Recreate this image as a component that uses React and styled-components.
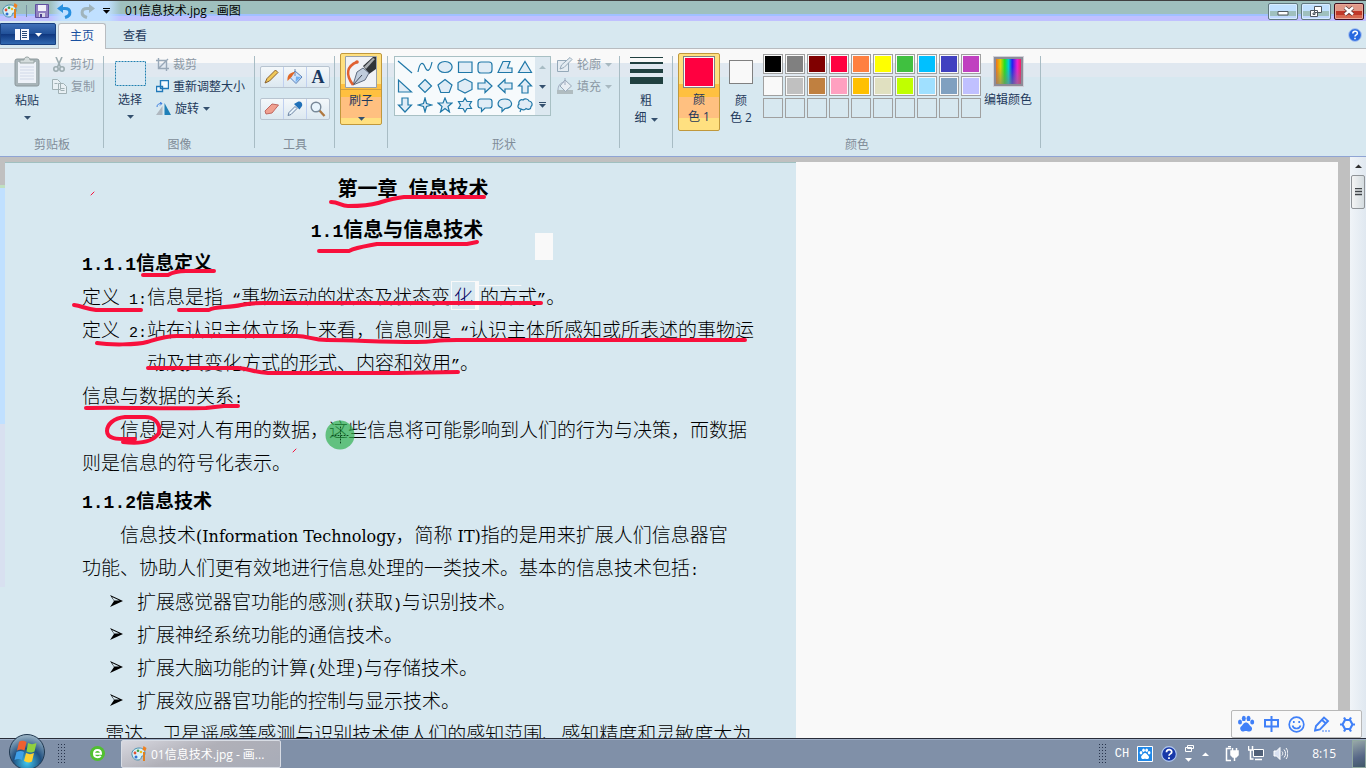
import React from 'react';
import styled, { createGlobalStyle } from 'styled-components';

const GlobalStyle = createGlobalStyle`
  * {
    box-sizing: border-box;
  }
  body {
    margin: 0;
    font-family: 'Open Sans', 'Noto Sans CJK SC', sans-serif;
    font-size: 12px;
    color: #1e395b;
  }
  button {
    font: inherit;
    color: inherit;
    background: none;
    border: 0;
    padding: 0;
  }
  svg {
    display: block;
    flex: none;
  }
`;

const Window = styled.div`
  height: 100vh;
  display: flex;
  flex-direction: column;
  overflow: hidden;
  background: #d7e8f0;
`;

/* title bar */

const TitleBar = styled.header`
  flex: none;
  height: 21px;
  display: flex;
  align-items: center;
  border-top: 1px solid #404040;
  background: linear-gradient(#9fc0be 0 13px, #a0c0ff 13px 15px, #c0c0ff 15px);
`;

const QuickAccess = styled.div`
  display: flex;
  align-items: center;
  height: 20px;
  width: 121px;
  padding-left: 2px;
  gap: 8px;
  background: linear-gradient(90deg, transparent 50px, #c0e0ff 62px 108px, transparent);
`;

const Divider = styled.i`
  width: 1px;
  height: 12px;
  background: #7890a0;
`;

const Title = styled.h1`
  flex: 1;
  margin: 0;
  padding-left: 4px;
  font-size: 12px;
  font-weight: 400;
  line-height: 18px;
  color: #000;
`;

const WindowButtons = styled.div`
  display: flex;
  gap: 3px;
  padding-right: 2px;
`;

const WindowButton = styled.button`
  width: 30px;
  height: 17px;
  display: grid;
  place-items: center;
  border: 1px solid ${p => (p.$close ? '#401020' : '#607880')};
  border-radius: 2px;
  box-shadow: inset 0 0 0 1px ${p => (p.$close ? '#e8a898' : '#d8ecff')};
  background: ${p =>
    p.$close
      ? 'linear-gradient(#e09888 0 7px, #c03828 7px 11px, #d86850 11px)'
      : 'linear-gradient(#c0e0ff 0 7px, #9fc0be 7px 12px, #c0d8ff 12px)'};
`;

/* ribbon */

const Tabs = styled.nav`
  flex: none;
  height: 28px;
  display: flex;
  align-items: flex-end;
  border-bottom: 1px solid #b8bcc0;
`;

const FileButton = styled.button`
  width: 56px;
  height: 22px;
  align-self: flex-start;
  margin: 2px 2px 0 0;
  display: flex;
  align-items: center;
  justify-content: center;
  gap: 6px;
  border: 1px solid #184080;
  border-radius: 0 2px 0 0;
  background: linear-gradient(#4070b8, #205098 50%, #103880 52%, #3068b0);
`;

const Tab = styled.button`
  width: ${p => (p.$active ? '48px' : '58px')};
  height: 26px;
  margin-bottom: -1px;
  padding-bottom: 4px;
  color: ${p => (p.$active ? '#1850a0' : '#1e395b')};
  border: 1px solid ${p => (p.$active ? '#b8bcc0' : 'transparent')};
  border-bottom: 0;
  border-radius: 3px 3px 0 0;
  background: ${p => (p.$active ? '#f9f9f9' : 'transparent')};
`;

const HelpButton = styled.button`
  margin: 0 4px 6px auto;
`;

const Ribbon = styled.section`
  flex: none;
  height: 108px;
  display: flex;
  padding-top: 7px;
  border-bottom: 1px solid #8fa4d4;
  background: linear-gradient(#f9f9f9 0 14px, #e0e8f0 14px 28px, #d7e8f0 28px);
`;

const Group = styled.div`
  width: ${p => p.$width}px;
  height: 100px;
  display: flex;
  flex-direction: column;
  justify-content: space-between;
  background: linear-gradient(#a8bcc4, #a8bcc4) right top / 1px 92px no-repeat;
`;

const GroupBody = styled.div`
  display: flex;
  align-items: flex-start;
  gap: ${p => p.$gap || 0}px;
  padding-left: ${p => p.$pad || 0}px;
  margin-top: ${p => (p.$raised ? '-3px' : '0')};
`;

const GroupLabel = styled.div`
  line-height: 18px;
  padding-bottom: 2px;
  text-align: center;
  color: #808c98;
`;

const Stack = styled.div`
  display: flex;
  flex-direction: column;
  gap: ${p => p.$gap || 0}px;
`;

const BigButton = styled.button`
  width: ${p => p.$width || 42}px;
  display: flex;
  flex-direction: column;
  align-items: center;
  line-height: 17px;
  gap: 5px;
  padding-top: ${p => p.$drop || 0}px;
`;

const SmallButton = styled.button`
  display: flex;
  align-items: center;
  gap: 4px;
  height: 22px;
  padding-bottom: 6px;
  white-space: nowrap;
  color: ${p => (p.$muted ? '#8c98a4' : '#1e395b')};
`;

const ToolRow = styled.div`
  display: flex;
  height: 22px;
  border: 1px solid #b8c4d0;
  border-radius: 2px;
  background: linear-gradient(#f4f8fa, #dce8f0);
`;

const ToolButton = styled.button`
  width: 22px;
  display: grid;
  place-items: center;
  & + & {
    width: 23px;
    border-left: 1px solid #c0d0f0;
  }
`;

const HotButton = styled.button`
  width: 42px;
  height: ${p => p.$height}px;
  display: flex;
  flex-direction: column;
  align-items: center;
  padding-top: 2px;
  line-height: 17px;
  border: 1px solid #c0983c;
  border-radius: 2px;
  background: linear-gradient(#ffe080 0 30px, #ffc040 30px 43px, #ffc080 43px 64px, #ffe080 64px);
`;

const HotSplit = styled.span`
  align-self: stretch;
  display: flex;
  flex-direction: column;
  align-items: center;
  gap: 6px;
  margin-top: 1px;
  padding-top: 2px;
  border-top: 1px solid #d0a040;
`;

const ColorLabel = styled.span`
  padding-top: 3px;
  text-align: center;
`;

const WidthLabel = styled.span`
  padding-top: 2px;
  text-align: center;
  svg {
    display: inline-block;
    vertical-align: middle;
    margin-left: 4px;
  }
`;

const ShapeBox = styled.div`
  display: flex;
  width: 157px;
  height: 60px;
  border: 1px solid #a8c0c4;
  background: #f6fafc;
`;

const ShapeGrid = styled.div`
  display: grid;
  grid-template-columns: repeat(7, 20px);
  grid-auto-rows: 19px;
`;

const ShapeButton = styled.button`
  display: grid;
  place-items: center;
`;

const ShapeScroll = styled.div`
  flex: 1;
  display: grid;
  grid-template-rows: repeat(3, 1fr);
  background: #dce8f0;
`;

const ColorChip = styled.span`
  width: ${p => p.$size}px;
  height: ${p => p.$size}px;
  border: 1px solid #808080;
  box-shadow: inset 0 0 0 1px #f9f9f9;
  background: ${p => p.$color};
`;

const Palette = styled.div`
  display: grid;
  grid-template-columns: repeat(10, 20px);
  grid-auto-rows: 20px;
  gap: 2px;
  padding: 1px 0 0 1px;
`;

const Swatch = styled.button`
  border: 1px solid #a0a0a0;
  ${p => p.$color && `background: ${p.$color}; box-shadow: inset 0 0 0 1px #f9f9f9;`}
`;

const Rainbow = styled.span`
  width: 29px;
  height: 29px;
  border: 2px solid #8c8c98;
  outline: 1px solid #d0d0d8;
  background: linear-gradient(rgba(128, 128, 128, 0) 30%, rgba(128, 128, 128, 0.6)),
    linear-gradient(90deg, #f07020, #e0d000 18%, #20e020 35%, #00d0d0 50%, #2020f0 65%, #f020d0 85%, #f02060);
`;

/* canvas */

const Workspace = styled.main`
  flex: 1;
  min-height: 0;
  display: flex;
  background: #c0c0c0;
`;

const LeftEdge = styled.div`
  flex: none;
  width: 5px;
  background: linear-gradient(#c0c0c0 0 28px, #c0e0c0 28px 31px, #c0e0ff 31px 267px, #d8e0f0 267px 430px, #d7e8f0 430px);
`;

const Sheet = styled.div`
  flex: 1;
  margin-top: 5px;
  overflow: hidden;
  background: #f9f9f9;
`;

const Page = styled.article`
  position: relative;
  width: 791px;
  height: 100%;
  padding: 8px 52px 0 77px;
  border-top: 1px solid #a0c0c0;
  color: #000;
  background: #d7e8f0;
  font-family: 'Noto Sans CJK SC', sans-serif;
  font-size: 19px;
  font-weight: 300;
  line-height: 33px;
  white-space: nowrap;
`;

const Latin = styled.span`
  font-family: ${p => (p.$words ? "'DejaVu Serif', serif" : "'Liberation Mono', monospace")};
  font-size: ${p => (p.$bold ? '18px' : p.$words ? '16px' : '15px')};
  line-height: 0;
`;

const ChapterTitle = styled.h2`
  margin: 0 0 8px;
  text-align: center;
  font-size: 20px;
  font-weight: 700;
  line-height: 33px;
`;

const SectionTitle = styled(ChapterTitle)`
  margin: 0;
  padding-right: 32px;
`;

const SubTitle = styled.h3`
  margin: ${p => (p.$spaced ? '5px' : '0')} 0 1px;
  font-size: 19px;
  font-weight: 700;
  line-height: 33px;
`;

const Paragraph = styled.p`
  margin: ${p => (p.$indent ? '1px' : '0')} 0 0;
  & > span:first-child {
    padding-left: ${p => (p.$indent ? '38px' : '0')};
  }
`;

const Line = styled.span`
  display: block;
  height: 33px;
  padding-left: ${p => (p.$hang ? '65px' : '0')};
`;

const Patch = styled.span`
  padding: 0 2px;
  margin: 0 1px;
  border: 1px solid #f9f9f9;
  border-right-width: 4px;
  color: #000060;
`;

const Bullets = styled.ul`
  margin: 1px 0 0;
  padding: 0;
  list-style: none;
`;

const Bullet = styled.li`
  display: flex;
  align-items: center;
  gap: 14px;
  padding-left: 28px;
  height: 33px;
`;

const Ink = styled.svg`
  position: absolute;
  left: 0;
  top: 0;
  fill: none;
  stroke: #f8103c;
  stroke-width: 4;
  stroke-linecap: round;
  stroke-linejoin: round;
`;

const ScrollBar = styled.div`
  flex: none;
  width: 16px;
  margin-left: 12px;
  display: flex;
  flex-direction: column;
  align-items: center;
  background: linear-gradient(90deg, #f0f4f8, #e0e8f0);
`;

const ScrollArrow = styled.button`
  height: 18px;
`;

const ScrollThumb = styled.button`
  width: 14px;
  height: 34px;
  display: grid;
  place-items: center;
  border: 1px solid #909498;
  border-radius: 2px;
  background: linear-gradient(90deg, #f4f4f4, #d4dce0);
`;

/* floating input toolbar */

const ImeBar = styled.div`
  position: absolute;
  right: 4px;
  bottom: 30px;
  width: 131px;
  height: 28px;
  display: flex;
  align-items: center;
  justify-content: space-around;
  border: 1px solid #b8b8b8;
  border-radius: 2px;
  background: #f9f9f9;
  color: #4080f8;
`;

/* task bar */

const TaskBar = styled.footer`
  flex: none;
  position: relative;
  height: 30px;
  display: flex;
  align-items: center;
  border-top: 1px solid #282c38;
  background: linear-gradient(#a0b0c8 0 1px, #8090a8 1px);
  color: #fff;
`;

const StartButton = styled.button`
  position: absolute;
  left: 8px;
  bottom: -3px;
`;

const PinnedApps = styled.div`
  display: flex;
  align-items: center;
  gap: 24px;
  width: 121px;
  padding-left: 58px;
`;

const TaskButton = styled.button`
  width: 160px;
  height: 28px;
  display: flex;
  align-items: center;
  gap: 4px;
  padding-left: 9px;
  border: 1px solid #d8dce4;
  border-radius: 2px;
  background: linear-gradient(160deg, #d8d8e0, #b0b0b8 45%, #a8acb8);
  white-space: nowrap;
`;

const Tray = styled.div`
  margin-left: auto;
  display: flex;
  align-items: center;
  height: 28px;
  gap: 8px;
`;

const InputLang = styled.span`
  font-family: 'Liberation Mono', monospace;
`;

const Clock = styled.time`
  padding: 0 8px 0 16px;
`;

const ShowDesktop = styled.button`
  width: 14px;
  height: 28px;
  border: 1px solid #90a8a0;
  background: linear-gradient(160deg, #98a8a8, #586888 60%, #405868);
`;

/* icons */

const Caret = ({ color = '#34506e', bar, up }) => (
  <svg width="7" height="6" viewBox="0 0 7 6">
    {bar && <path d="M0 .5h7" stroke={color} />}
    <path d={up ? 'M0 5L3.500 1.500L7 5z' : 'M0 2h7L3.500 5.700z'} fill={color} />
  </svg>
);

const PaintIcon = ({ size = 16 }) => (
  <svg width={size} height={size} viewBox="0 0 16 16">
    <path d="M1 9C0 5 4 2 8 2c4 0 6 2 6 5s-2 3-3 3 0 4-4 4-5-2-6-5z" fill="#d8f0f8" stroke="#4890b0" />
    <circle cx="4" cy="7" r="1.400" fill="#e05030" />
    <circle cx="7" cy="4.800" r="1.300" fill="#40a040" />
    <circle cx="5" cy="11" r="1.500" fill="#3070d0" />
    <circle cx="10" cy="6" r="1.300" fill="#f0c020" />
    <path d="M13 6v9" stroke="#e08020" strokeWidth="2" />
    <path d="M11.500 4l1-4 3 2-1 3z" fill="#f08020" />
  </svg>
);

const SaveIcon = () => (
  <svg width="14" height="14" viewBox="0 0 14 14">
    <path d="M.5.5h13v13H.5z" fill="#9080c0" stroke="#6050a0" />
    <path d="M3 1h8v6H3z" fill="#f0f0f8" />
    <path d="M4 9h6v4H4z" fill="#d8d8e8" />
    <path d="M5 10h2v3H5z" fill="#504090" />
  </svg>
);

const UndoIcon = ({ redo }) => (
  <svg width="15" height="15" viewBox="0 0 15 15" fill="none">
    <g transform={redo ? 'matrix(-1 0 0 1 15 0)' : undefined}>
      <path d="M4 4.500h4c6 0 7 7 0 9" stroke={redo ? '#a0b4bc' : '#2890e0'} strokeWidth="3" />
      <path d="M0 4.500L6 0v9z" fill={redo ? '#a0b4bc' : '#2890e0'} />
    </g>
  </svg>
);

const HelpIcon = ({ size = 14 }) => (
  <svg width={size} height={size} viewBox="0 0 14 14">
    <circle cx="7" cy="7" r="6.400" fill={size > 14 ? '#1838a8' : '#2868e0'} stroke="#b0c8f0" />
    <path d="M4.800 5.500c0-3 4.600-3 4.600-.3C9.400 7 7 6.800 7 8.500M7 9.800v1.500" fill="none" stroke="#fff" strokeWidth="1.500" />
  </svg>
);

const PasteIcon = () => (
  <svg width="26" height="31" viewBox="0 0 26 31">
    <rect x="1" y="3" width="24" height="27" rx="2" fill="#a8b4b8" stroke="#8c989c" />
    <path d="M4 6h18v21H4z" fill="#eef2f8" />
    <path d="M6 11h14M6 14h14M6 17h14M6 20h14M6 23h14" stroke="#d0d8e8" />
    <path d="M6 6V4h4c0-4 6-4 6 0h4v3H6z" fill="#d4dcdc" stroke="#98a4a4" />
  </svg>
);

const CutIcon = () => (
  <svg width="14" height="15" viewBox="0 0 14 15" fill="none" stroke="#9cacb0" strokeWidth="1.600">
    <path d="M4 0l4.500 10M10 0L5.500 10" />
    <circle cx="4" cy="12" r="2.200" />
    <circle cx="10" cy="12" r="2.200" />
  </svg>
);

const CopyIcon = () => (
  <svg width="15" height="15" viewBox="0 0 15 15" fill="#e8f0f4" stroke="#a0b0b4">
    <path d="M.5.5h5l3 3v7h-8zM6.500 4.500h5l3 3v7h-8z" />
    <path d="M8.500 9.500h4M8.500 11.500h4M2.500 4.500h3" />
  </svg>
);

const CropIcon = () => (
  <svg width="13" height="13" viewBox="0 0 13 13" fill="none" stroke="#98a8b8" strokeWidth="1.400">
    <path d="M2.500 0v10.500H13M0 2.500h10.500V13M2.500 10.500L12 1" />
  </svg>
);

const ResizeIcon = () => (
  <svg width="13" height="13" viewBox="0 0 13 13" fill="#f4faff" stroke="#2078b8">
    <path d="M4.500.5h8v8h-8zM.5 6.500h6v5h-6z" strokeWidth="1.400" />
  </svg>
);

const RotateIcon = () => (
  <svg width="15" height="13" viewBox="0 0 15 13">
    <path d="M6.500 4v9H0z" fill="#b0b8c0" />
    <path d="M8.500 1L15 13H8.500z" fill="#2080b8" />
    <path d="M1 5c0-3 2-3.500 5-3.500M4 0l2 1.500L4 3.500" fill="none" stroke="#4080e0" />
  </svg>
);

const SelectIcon = () => (
  <svg width="31" height="25" viewBox="0 0 31 25">
    <path d="M.5.500h30v24H.5z" fill="#dceaf4" stroke="#2080b0" strokeDasharray="2 1" />
  </svg>
);

const TOOL_ICONS = {
  铅笔: <path d="M1 14l2-4.500L11.500 1 14 3.500 5.500 12z" fill="#f0c858" stroke="#886030" />,
  填充: (
    <g>
      <path d="M8 2l7 6-6 6.500-6-6z" fill="#d0e4fc" stroke="#5880b8" />
      <path d="M8 0v7" stroke="#7088b0" fill="none" />
      <path d="M.5 12C0 7 2 3.500 8 3L4.500 8z" fill="#e06828" />
      <path d="M8.500 13.500L14 8 9 7.500z" fill="#70b0f0" />
    </g>
  ),
  文本: null,
  橡皮: <path d="M1 10l7-7 6.500 1-6.500 8-6 1z" fill="#f0a090" stroke="#c06860" />,
  取色: (
    <g>
      <path d="M1 14.500L2 11.500l6-6 2 2-6 6z" fill="#e8f4fc" stroke="#6880a0" />
      <path d="M7 3l5.500 5.500L15 5c1-3-1.500-5.500-4.500-4z" fill="#2070b8" />
    </g>
  ),
  放大镜: (
    <g>
      <path d="M9 9l5.500 6" stroke="#b07840" strokeWidth="2.400" />
      <circle cx="6" cy="6" r="4.800" fill="#e8f4fc" stroke="#788898" strokeWidth="1.400" />
    </g>
  )
};

const TextGlyph = styled.b`
  font-family: 'Liberation Serif', serif;
  font-size: 18px;
  line-height: 18px;
  color: #183860;
`;

const Tool = ({ name }) => (
  <ToolButton aria-label={name}>
    {name === '文本' ? (
      <TextGlyph>A</TextGlyph>
    ) : (
      <svg width="16" height="16" viewBox="0 0 16 16">
        {TOOL_ICONS[name]}
      </svg>
    )}
  </ToolButton>
);

const BrushIcon = () => (
  <svg width="32" height="32" viewBox="0 0 32 32">
    <path d="M.5.5h31v31H.5z" fill="#f0f2f6" stroke="#98a0a8" />
    <path d="M18 10L28 1h3v12l-7 5z" fill="#303438" />
    <path d="M19 11L28 2l2 1-9 10z" fill="#a8acb0" />
    <path d="M8 29l4-13 6-4 6 5-4 7z" fill="#c0ccdc" stroke="#606c80" />
    <path d="M8 29l9-10" stroke="#404858" />
    <path d="M12 6C2 10 0 18 8 29" fill="none" stroke="#e06030" strokeWidth="2.500" />
    <circle cx="12" cy="6" r="1.800" fill="#e06030" />
  </svg>
);

const SHAPES = [
  'M1 2l14 12',
  'M1 13C3 2 6 3 8 8s5 5 7-5',
  'M8 2.500c9.500 0 9.500 11 0 11s-9.500-11 0-11z',
  'M1.500 3h13.500v10.500H1.500z',
  'M4 3h8q3 0 3 3v5q0 3-3 3H4q-3 0-3-3V6q0-3 3-3z',
  'M1 13.500L6 2.500h7L10.500 9l4.500 0v4.500z',
  'M8 2.500l6.500 11h-13z',
  'M1.500 2v12h13z',
  'M8 1.500L14.500 8 8 14.500 1.500 8z',
  'M8 1.500l7 5.500-2.800 7.500H3.800L1 7z',
  'M8 1l7 3.500v7L8 15l-7-3.500v-7z',
  'M1 5h7V1.500l7 6.500-7 6.500V11H1z',
  'M15 5H8V1.500L1 8l7 6.500V11h7z',
  'M5 15V8H1.500L8 1l6.500 7H11v7z',
  'M5 1v7H1.500L8 15l6.500-7H11V1z',
  'M8 1l1.500 5.500L15 8 9.500 9.500 8 15 6.500 9.500 1 8l5.500-1.500z',
  'M8 1l2 5h5l-4 3.500L12.500 15 8 11.500 3.500 15 5 9.500 1 6h5z',
  'M8 1l2 3.500h4.500L12.500 8l2 3.500H10L8 15l-2-3.500H1.500l2-3.500-2-3.500H6z',
  'M3.500 2h9q2.500 0 2.500 2.500v4q0 2.500-2.500 2.500H8l-3.500 3.500V11h-1Q1 11 1 8.500v-4Q1 2 3.500 2z',
  'M5 11C-1 9 0 2 8 2s9.500 9 0 9.500L5 14.500z',
  'M4 12C1 12 0 9 2 7c-1-3 2-5 4-4 2-2 5-1 6 1 3 0 4 4 2 5.500 0 3-3 3.500-5 2-1 1.500-3 1.500-5 .5l-1 3z'
];

const OutlineIcon = () => (
  <svg width="16" height="15" viewBox="0 0 16 15" fill="#e4ecf2" stroke="#94a8b8">
    <path d="M.5 3.500h11v11H.5z" />
    <path d="M3 12l1.500-4L13 .500l2 2-8 8z" />
  </svg>
);

const FillIcon = () => (
  <svg width="16" height="16" viewBox="0 0 16 16">
    <path d="M0 12h16v4H0z" fill="#b0bcc0" />
    <path d="M8 2l6.500 6-6 5.500L3 8z" fill="#e8eef4" stroke="#98a8b8" />
    <path d="M8 0v7M1 12c0-4 2-7 6-8" stroke="#a0acc0" fill="none" />
  </svg>
);

const StrokeIcon = () => (
  <svg width="33" height="28" viewBox="0 0 33 28" fill="#204040">
    <path d="M0 0h33v1H0zM0 5h33v2H0zM0 12h33v4H0zM0 20h33v7H0z" />
  </svg>
);

const PawIcon = ({ size = 18 }) => (
  <svg width={size} height={size} viewBox="0 0 18 18" fill="currentColor">
    <ellipse cx="3" cy="7" rx="2" ry="2.600" />
    <ellipse cx="6.800" cy="3.400" rx="2" ry="2.700" />
    <ellipse cx="11.500" cy="3.400" rx="2" ry="2.700" />
    <ellipse cx="15.200" cy="7" rx="2" ry="2.600" />
    <path d="M9 7.500c2.500 0 3 2.500 5 4s1 5-1.500 5-2-.5-3.500-.5-2 .5-3.500.5-3.500-3.500-1.500-5 2.500-4 5-4z" />
  </svg>
);

const SmileIcon = () => (
  <svg width="17" height="17" viewBox="0 0 17 17" fill="none" stroke="currentColor" strokeWidth="1.700">
    <circle cx="8.500" cy="8.500" r="7.300" />
    <path d="M4.500 9.500c1 4 7 4 8 0" />
    <path d="M5.800 5v2M11.200 5v2" />
  </svg>
);

const PenIcon = () => (
  <svg width="16" height="16" viewBox="0 0 16 16" fill="none" stroke="currentColor" strokeWidth="1.900">
    <path d="M1 14.500l1-4.500 8-8.500L14 5 6 13.500zM8 4l4 3.500" />
    <path d="M8 15h8" strokeDasharray="2 1" strokeWidth="1.200" />
  </svg>
);

const GearIcon = () => (
  <svg width="17" height="17" viewBox="0 0 17 17" fill="none" stroke="currentColor" strokeWidth="2.200">
    <path d="M5 1.500L6.500 4h4L12 1.500M5 15.500L6.500 13h4L12 15.500M1 8.500h2.500L6 4M3.500 8.500L6 13M16 8.500h-2.500L11 4M13.500 8.500L11 13" />
  </svg>
);

const DotGrip = () => (
  <svg width="8" height="20" viewBox="0 0 8 20">
    <path d="M.5 0v20M3.500 0v20M6.500 0v20" stroke="#28344c" strokeDasharray="1 2" />
  </svg>
);

const StartOrb = () => (
  <svg width="38" height="38" viewBox="0 0 38 38">
    <defs>
      <radialGradient id="orb" cx="50%" cy="80%" r="80%">
        <stop offset="0" stopColor="#40c8f0" />
        <stop offset="0.5" stopColor="#205080" />
        <stop offset="1" stopColor="#a0b8c8" />
      </radialGradient>
    </defs>
    <circle cx="19" cy="19" r="17.500" fill="url(#orb)" stroke="#203850" />
    <path d="M11 9c3-2 5-1 7.500 0l-2 8.500c-3-1.500-5-1.500-7.500 0z" fill="#f06030" />
    <path d="M20 10c3 1.500 5 1.500 8.500 0l-2 8.500c-3 1.500-5 1-8 0z" fill="#90d040" />
    <path d="M8.500 19c3-1.500 5-1.500 7.500 0l-2 8c-3-1.500-5-1-7.500 0z" fill="#40a0e8" />
    <path d="M18 20c3 1.500 5 1.500 8 0l-2 8.500c-3 1.500-5 1-8-.5z" fill="#ffd030" />
  </svg>
);

const BrowserIcon = () => (
  <svg width="15" height="15" viewBox="0 0 15 15">
    <circle cx="7.500" cy="7.500" r="7.500" fill="#50c030" />
    <path d="M3.500 7.700h7.500c0-5-7-5-7 0 0 4 5 4.500 6.700 2" fill="none" stroke="#fff" strokeWidth="2" />
  </svg>
);

const PlugIcon = () => (
  <svg width="15" height="16" viewBox="0 0 15 16" fill="none" stroke="#fff">
    <path d="M6 2.500H1.500v12H6M3 .5h3" strokeWidth="1.500" />
    <path d="M6 5h7v4l-2 2H8L6 9zM7.500 2v3M11.500 2v3M9.500 11v4" fill="#fff" strokeWidth="1.500" />
  </svg>
);

const NetworkIcon = () => (
  <svg width="17" height="15" viewBox="0 0 17 15" fill="none" stroke="#fff">
    <path d="M5.500 3.500h10v7h-10z" fill="#506078" />
    <path d="M7 13.500h7M.5 0v4h4V0M2.500 4v9h3" strokeWidth="1.500" />
  </svg>
);

const SpeakerIcon = () => (
  <svg width="15" height="15" viewBox="0 0 15 15" fill="none" stroke="#fff">
    <path d="M1 5h2.500L7 1.500v12L3.500 10H1z" fill="#d8e0f0" />
    <path d="M9 5.500c1 1 1 3 0 4M11 3.500c2 2 2 6 0 8M13 2c2.500 3 2.500 8 0 11" />
  </svg>
);

const ArrowBullet = () => (
  <svg width="13" height="12" viewBox="0 0 13 12">
    <path d="M0 0l13 6L0 12l4-6z" fill="#000" />
    <path d="M2 2l7.500 3.500H4z" fill="#d7e8f0" />
  </svg>
);

/* Half-width runs are set in a Latin face, everything else in the CJK one. */
const Mixed = ({ children, bold }) =>
  children.split(/([\x20-\x7e“”]+)/).map((part, i) =>
    i % 2 ? (
      <Latin key={i} $bold={bold} $words={/[A-Za-z]/.test(part)}>
        {part}
      </Latin>
    ) : (
      part
    )
  );

const STROKES = [
  'M331 202c8 0 10 4 17 4 10 0 20 0 30-3s16-5 26-6l80 0',
  'M319 251h30c8-4 18-5 28-7l90 0 10-2',
  'M143 275h25c5-3 10-4 18-4l28 0',
  'M74 305c8 1 12 4 22 5h45',
  'M179 310h30c5-4 20-2 32-5 8-2 14-2 22-2h278',
  'M97 343c12 2 40 2 50-1s18-6 30-6h120c12 0 15 4 30 4 30 0 50 2 90 2 20 0 15-2 40-2h288',
  'M148 368h90c12 1 15 4 30 5h130l60-1',
  'M86 408c40-1 70 1 120 0l18-2h14',
  'M123 442c16 2 30 0 36-9 2-11-6-16-14-16h-20c-12 1-18 8-18 14 0 9 12 8 28 8'
];

const COLORS = [
  '#000000', '#808080', '#800000', '#ff0040', '#ff8040', '#ffff00', '#40c040', '#00c0ff', '#4040c0', '#c040c0',
  '#f9f9f9', '#c0c0c0', '#c08040', '#ffa0c0', '#ffc000', '#e0e0c0', '#c0ff00', '#a0e0ff', '#80a0c0', '#c0c0ff'
];

const BULLETS = [
  '扩展感觉器官功能的感测(获取)与识别技术。',
  '扩展神经系统功能的通信技术。',
  '扩展大脑功能的计算(处理)与存储技术。',
  '扩展效应器官功能的控制与显示技术。'
];

const RibbonGroups = () => (
  <Ribbon>
    <Group $width={104}>
      <GroupBody $pad={6} $gap={4}>
        <BigButton>
          <PasteIcon />
          粘贴
          <Caret />
        </BigButton>
        <Stack>
          <SmallButton $muted>
            <CutIcon />
            剪切
          </SmallButton>
          <SmallButton $muted>
            <CopyIcon />
            复制
          </SmallButton>
        </Stack>
      </GroupBody>
      <GroupLabel>剪贴板</GroupLabel>
    </Group>
    <Group $width={151}>
      <GroupBody $pad={5} $gap={5}>
        <BigButton $drop={5}>
          <SelectIcon />
          选择
          <Caret />
        </BigButton>
        <Stack>
          <SmallButton $muted>
            <CropIcon />
            裁剪
          </SmallButton>
          <SmallButton>
            <ResizeIcon />
            重新调整大小
          </SmallButton>
          <SmallButton>
            <RotateIcon />
            旋转
            <Caret />
          </SmallButton>
        </Stack>
      </GroupBody>
      <GroupLabel>图像</GroupLabel>
    </Group>
    <Group $width={80}>
      <GroupBody $pad={5}>
        <Stack $gap={10}>
          <i />
          <ToolRow>
            {['铅笔', '填充', '文本'].map(t => (
              <Tool key={t} name={t} />
            ))}
          </ToolRow>
          <ToolRow>
            {['橡皮', '取色', '放大镜'].map(t => (
              <Tool key={t} name={t} />
            ))}
          </ToolRow>
        </Stack>
      </GroupBody>
      <GroupLabel>工具</GroupLabel>
    </Group>
    <Group $width={53}>
      <GroupBody $pad={5} $raised>
        <HotButton $height={72}>
          <BrushIcon />
          <HotSplit>
            刷子
            <Caret />
          </HotSplit>
        </HotButton>
      </GroupBody>
    </Group>
    <Group $width={232}>
      <GroupBody $pad={6} $gap={6}>
        <ShapeBox>
          <ShapeGrid>
            {SHAPES.map((d, i) => (
              <ShapeButton key={d} aria-label={`形状 ${i + 1}`}>
                <svg width="16" height="16" viewBox="0 0 16 16">
                  <path d={d} fill={i < 2 ? 'none' : '#e0ecf6'} stroke="#2078a8" strokeWidth="1.200" />
                </svg>
              </ShapeButton>
            ))}
          </ShapeGrid>
          <ShapeScroll>
            <ShapeButton aria-label="上">
              <Caret up color="#a8bcc4" />
            </ShapeButton>
            <ShapeButton aria-label="下">
              <Caret />
            </ShapeButton>
            <ShapeButton aria-label="更多">
              <Caret bar />
            </ShapeButton>
          </ShapeScroll>
        </ShapeBox>
        <Stack>
          <SmallButton $muted>
            <OutlineIcon />
            轮廓
            <Caret color="#a8b8c0" />
          </SmallButton>
          <SmallButton $muted>
            <FillIcon />
            填充
            <Caret color="#a8b8c0" />
          </SmallButton>
        </Stack>
      </GroupBody>
      <GroupLabel>形状</GroupLabel>
    </Group>
    <Group $width={53}>
      <GroupBody $pad={5}>
        <BigButton $drop={1}>
          <StrokeIcon />
          <WidthLabel>
            粗
            <br />
            细
            <Caret />
          </WidthLabel>
        </BigButton>
      </GroupBody>
    </Group>
    <Group $width={368}>
      <GroupBody $pad={5} $raised>
        <HotButton $height={78}>
          <ColorChip $size={32} $color="#ff0040" />
          <ColorLabel>
            颜
            <br />色 1
          </ColorLabel>
        </HotButton>
        <BigButton $drop={7}>
          <ColorChip $size={24} $color="#f9f9f9" />
          <ColorLabel>
            颜
            <br />色 2
          </ColorLabel>
        </BigButton>
        <Palette>
          {Array.from({ length: 30 }, (_, i) => (
            <Swatch key={i} $color={COLORS[i]} aria-label={COLORS[i] || '空'} />
          ))}
        </Palette>
        <BigButton $width={54} $drop={4}>
          <Rainbow />
          编辑颜色
        </BigButton>
      </GroupBody>
      <GroupLabel>颜色</GroupLabel>
    </Group>
  </Ribbon>
);

const Document = () => (
  <Page>
    <ChapterTitle>
      第一章<Mixed bold> </Mixed>信息技术
    </ChapterTitle>
    <SectionTitle>
      <Mixed bold>1.1信息与信息技术</Mixed>
    </SectionTitle>
    <SubTitle>
      <Mixed bold>1.1.1信息定义</Mixed>
    </SubTitle>
    <Paragraph>
      <Line>
        <Mixed>定义 1:信息是指 “事物运动的状态及状态变</Mixed>
        <Patch>化</Patch>
        <Mixed>的方式”。</Mixed>
      </Line>
    </Paragraph>
    <Paragraph>
      <Line>
        <Mixed>定义 2:站在认识主体立场上来看，信息则是 “认识主体所感知或所表述的事物运</Mixed>
      </Line>
      <Line $hang>
        <Mixed>动及其变化方式的形式、内容和效用”。</Mixed>
      </Line>
    </Paragraph>
    <Paragraph>
      <Line>
        <Mixed>信息与数据的关系:</Mixed>
      </Line>
    </Paragraph>
    <Paragraph $indent>
      <Line>信息是对人有用的数据，这些信息将可能影响到人们的行为与决策，而数据</Line>
      <Line>则是信息的符号化表示。</Line>
    </Paragraph>
    <SubTitle $spaced>
      <Mixed bold>1.1.2信息技术</Mixed>
    </SubTitle>
    <Paragraph $indent>
      <Line>
        <Mixed>信息技术(Information Technology，简称 IT)指的是用来扩展人们信息器官</Mixed>
      </Line>
      <Line>
        <Mixed>功能、协助人们更有效地进行信息处理的一类技术。基本的信息技术包括:</Mixed>
      </Line>
    </Paragraph>
    <Bullets>
      {BULLETS.map(text => (
        <Bullet key={text}>
          <ArrowBullet />
          <span>
            <Mixed>{text}</Mixed>
          </span>
        </Bullet>
      ))}
    </Bullets>
    <Paragraph>
      <Line>　 雷达、卫星遥感等感测与识别技术使人们的感知范围、感知精度和灵敏度大为</Line>
    </Paragraph>
    <Ink width="791" height="575" viewBox="5 163 791 575">
      <path d="M535 233h18v27h-18z" fill="#f9f9f9" stroke="none" />
      <path d="M476 285.500h45" stroke="#f9f9f9" style={{ strokeWidth: 1 }} />
      {STROKES.map(d => (
        <path key={d} d={d} />
      ))}
      <path d="M91 195l3-3M293 452l3-3" style={{ strokeWidth: 1 }} />
      <circle cx="340" cy="435" r="14.500" fill="rgba(48, 176, 80, 0.7)" stroke="none" />
      <g stroke="#104820" strokeDasharray="1 2" style={{ strokeWidth: 1 }}>
        <path d="M332 435.500h16M340.500 427v16" />
      </g>
    </Ink>
  </Page>
);

const App = () => (
  <Window>
    <GlobalStyle />
    <TitleBar>
      <QuickAccess>
        <PaintIcon />
        <Divider />
        <SaveIcon />
        <UndoIcon />
        <UndoIcon redo />
        <Caret bar color="#000" />
      </QuickAccess>
      <Title>01信息技术.jpg - 画图</Title>
      <WindowButtons>
        <WindowButton aria-label="最小化">
          <svg width="12" height="10" viewBox="0 0 12 10">
            <path d="M1 5.500h10v3.500H1z" fill="#fff" stroke="#505860" />
          </svg>
        </WindowButton>
        <WindowButton aria-label="还原">
          <svg width="12" height="11" viewBox="0 0 12 11" fill="#fff" stroke="#505860">
            <path d="M4.500.5h7v6h-7zM.5 4.500h7v6h-7z" />
            <path d="M3 7h2v1.500H3z" />
          </svg>
        </WindowButton>
        <WindowButton $close aria-label="关闭">
          <svg width="12" height="10" viewBox="0 0 12 10">
            <path d="M2 1.500l8 7M10 1.500l-8 7" stroke="#604040" strokeWidth="4" />
            <path d="M2 1.500l8 7M10 1.500l-8 7" stroke="#fff" strokeWidth="2.400" />
          </svg>
        </WindowButton>
      </WindowButtons>
    </TitleBar>
    <Tabs>
      <FileButton aria-label="文件">
        <svg width="14" height="11" viewBox="0 0 14 11">
          <path d="M0 0h14v11H0z" fill="#f8f8ff" />
          <path d="M7 2.500h5M7 4.500h5M7 6.500h5M7 8.500h5M5.500 0v11" stroke="#284878" />
        </svg>
        <Caret color="#fff" />
      </FileButton>
      <Tab $active>主页</Tab>
      <Tab>查看</Tab>
      <HelpButton aria-label="帮助">
        <HelpIcon />
      </HelpButton>
    </Tabs>
    <RibbonGroups />
    <Workspace>
      <LeftEdge />
      <Sheet>
        <Document />
      </Sheet>
      <ScrollBar>
        <ScrollArrow aria-label="向上滚动">
          <Caret up color="#303030" />
        </ScrollArrow>
        <ScrollThumb aria-label="滚动条">
          <svg width="7" height="8" viewBox="0 0 7 8">
            <path d="M0 .5h7M0 3.500h7M0 6.500h7" stroke="#404448" strokeWidth="1.500" />
          </svg>
        </ScrollThumb>
      </ScrollBar>
    </Workspace>
    <TaskBar>
      <StartButton aria-label="开始">
        <StartOrb />
      </StartButton>
      <PinnedApps>
        <DotGrip />
        <BrowserIcon />
      </PinnedApps>
      <TaskButton>
        <PaintIcon />
        01信息技术.jpg - 画...
      </TaskButton>
      <Tray>
        <DotGrip />
        <InputLang>CH</InputLang>
        <svg width="16" height="16" viewBox="0 0 16 16" color="#fff">
          <path d="M.5.5h15v15H.5z" fill="#2088e8" stroke="#fff" />
          <g transform="translate(2 2)">
            <PawIcon size={12} />
          </g>
        </svg>
        <HelpIcon size={16} />
        <Stack $gap={4}>
          <svg width="9" height="7" viewBox="0 0 9 7" fill="none" stroke="#fff">
            <path d="M2.500.5h6v3h-6zM.5 2.500h6v4h-6z" />
          </svg>
          <Caret color="#fff" />
        </Stack>
        <Caret up color="#fff" />
        <i />
        <PlugIcon />
        <NetworkIcon />
        <SpeakerIcon />
        <Clock>8:15</Clock>
        <ShowDesktop aria-label="显示桌面" />
      </Tray>
      <ImeBar>
        <PawIcon />
        <svg width="15" height="16" viewBox="0 0 15 16" fill="none" stroke="currentColor" strokeWidth="2">
          <path d="M1 4h13v6.500H1zM7.500 0v16" />
        </svg>
        <SmileIcon />
        <PenIcon />
        <GearIcon />
      </ImeBar>
    </TaskBar>
  </Window>
);

export default App;
